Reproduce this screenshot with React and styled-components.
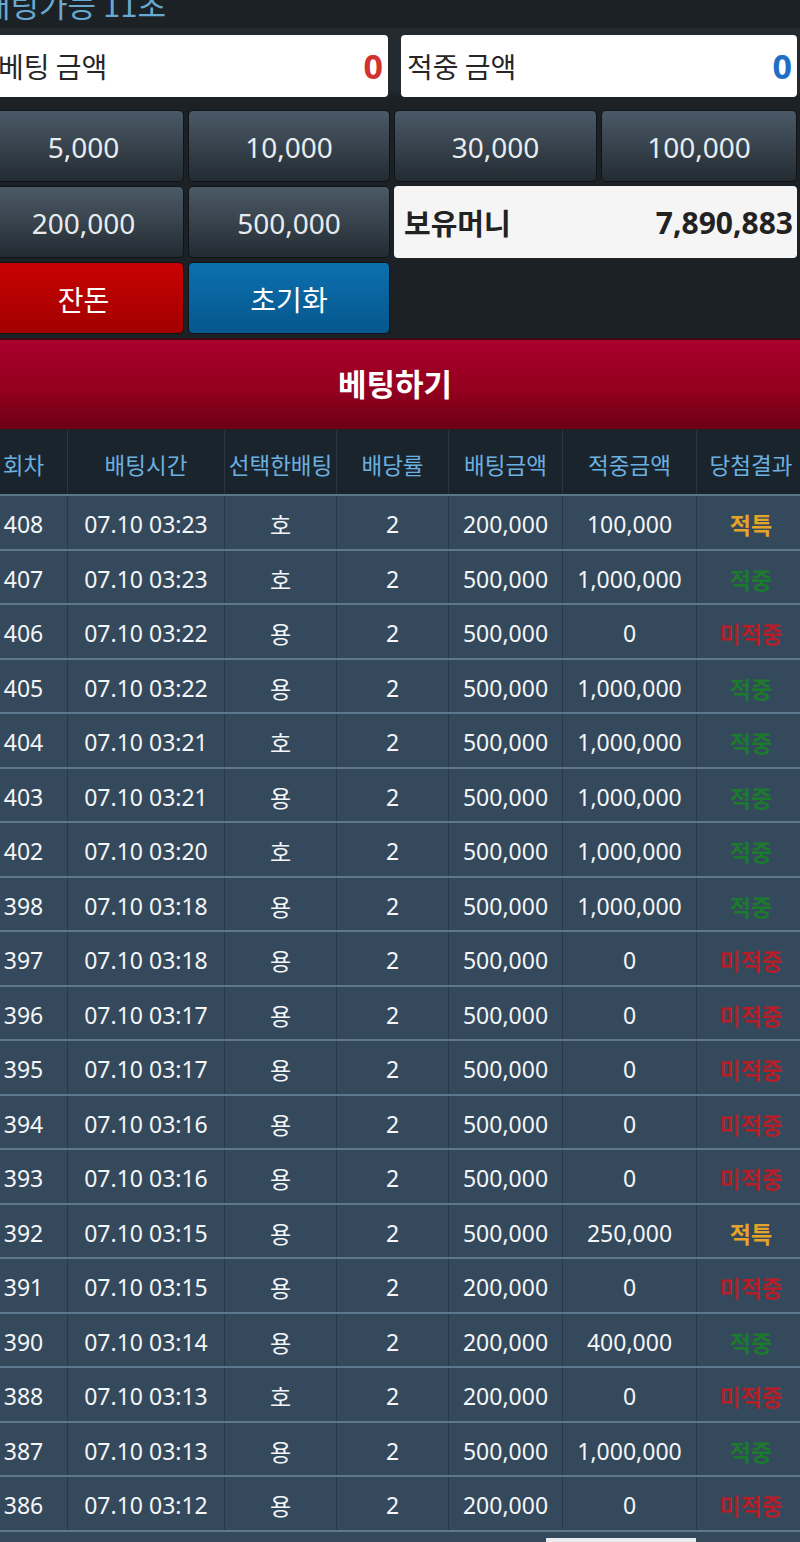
import React from 'react'
import styled, { createGlobalStyle } from 'styled-components'

const GlobalStyle = createGlobalStyle`
  html, body {
    margin: 0;
    padding: 0;
    background: #1c2126;
    overflow-x: hidden;
  }
  body {
    font-family: "Noto Sans", "Noto Sans CJK KR", sans-serif;
  }
`

const cols = '88px 157px 112px 112px 114px 134px 109px'

const Page = styled.div`
  width: 826px;
  margin-left: -20px;
  background: #1c2126;
`

const TitleBar = styled.div`
  height: 28px;
  overflow: hidden;
  padding-left: 2px;
`

const Title = styled.div`
  margin-top: -12px;
  font-family: "Noto Sans CJK KR", sans-serif;
  font-size: 31px;
  line-height: 32px;
  color: #68a9cf;
  white-space: nowrap;
`

const InputRow = styled.div`
  display: grid;
  grid-template-columns: 1fr 1fr;
  column-gap: 13px;
  padding: 7px 9px 0 12px;
  background: linear-gradient(#232a30 0, #232a30 62px, #1c2126 69px);
`

const AmountBox = styled.div`
  height: 62px;
  display: flex;
  align-items: center;
  justify-content: space-between;
  padding: 0 5px 0 6px;
  background: #fff;
  border-radius: 4px;
`

const AmountLabel = styled.span`
  font-family: "Noto Sans CJK KR", sans-serif;
  font-size: 28px;
  color: #262626;
`

const AmountValue = styled.span`
  font-size: 34px;
  font-weight: 700;
  color: ${p => p.$tone === 'blue' ? '#1f6fc6' : '#d23232'};
`

const ButtonGrid = styled.div`
  display: grid;
  grid-template-columns: 201px 202px 203px 1fr;
  grid-auto-rows: 72px;
  column-gap: 4px;
  row-gap: 4px;
  padding: 13px 9px 0 3px;
`

const Chip = styled.div`
  display: flex;
  align-items: center;
  justify-content: center;
  padding-top: 2px;
  border: 1px solid #101418;
  border-radius: 5px;
  font-size: 28px;
  color: ${p => p.$variant === 'chip' ? '#e8ecef' : '#ffffff'};
  font-family: "Noto Sans", "Noto Sans CJK KR", sans-serif;
  background: ${p =>
    p.$variant === 'red'
      ? 'linear-gradient(#c80202, #a20000)'
      : p.$variant === 'blue'
      ? 'linear-gradient(#0c70ae, #06578e)'
      : 'linear-gradient(#4b5a67, #232b32)'};
`

const MoneyBox = styled.div`
  grid-column: span 2;
  display: flex;
  align-items: center;
  justify-content: space-between;
  padding: 0 4px 0 10px;
  background: #f5f5f5;
  border-radius: 4px;
  font-weight: 700;
  color: #222;
`

const MoneyLabel = styled.span`
  font-family: "Noto Sans CJK KR", sans-serif;
  font-size: 29px;
`

const MoneyValue = styled.span`
  font-size: 30px;
`

const Banner = styled.div`
  box-sizing: border-box;
  margin-top: 4px;
  height: 91px;
  border-top: 2px solid #3a0a12;
  display: flex;
  align-items: center;
  justify-content: center;
  padding: 0 0 4px 4px;
  background: linear-gradient(#a8002b, #94001f 55%, #6e0015);
  color: #fff;
  font-family: "Noto Sans CJK KR", sans-serif;
  font-size: 31px;
  font-weight: 700;
`

const Table = styled.div`
  margin-top: 1px;
`

const HeadRow = styled.div`
  display: grid;
  grid-template-columns: ${cols};
  height: 64px;
  background: #1a242d;
  border-bottom: 2px solid #5b7589;
`

const HeadCell = styled.div`
  display: flex;
  align-items: center;
  justify-content: center;
  padding-top: 3px;
  border-right: 1px solid #2a3743;
  font-family: "Noto Sans CJK KR", sans-serif;
  font-size: 22.5px;
  color: #6cb0e0;
  white-space: nowrap;
`

const Row = styled.div`
  display: grid;
  grid-template-columns: ${cols};
  height: 52.5px;
  background: #34495c;
  border-bottom: 2px solid #5d788e;
`

const Cell = styled.div`
  display: flex;
  align-items: center;
  justify-content: center;
  padding-top: 4px;
  border-right: 1px solid #263849;
  font-size: 23px;
  color: #f4f6f8;
  white-space: nowrap;
`

const resultColors = {
  적특: '#e5a428',
  적중: '#1c7a2c',
  미적중: '#b51e28',
}

const Result = styled(Cell)`
  font-family: "Noto Sans CJK KR", sans-serif;
  font-weight: 700;
  color: ${p => resultColors[p.$result]};
`

const PartialRow = styled.div`
  position: relative;
  height: 20px;
  background: #34495c;
`

const HomeBar = styled.div`
  position: absolute;
  left: 566px;
  top: 6px;
  width: 150px;
  height: 6px;
  background: #e9edf0;
`

const headers = ['회차', '배팅시간', '선택한배팅', '배당률', '배팅금액', '적중금액', '당첨결과']

const rows = [
  ['408', '07.10 03:23', '호', '200,000', '100,000', '적특'],
  ['407', '07.10 03:23', '호', '500,000', '1,000,000', '적중'],
  ['406', '07.10 03:22', '용', '500,000', '0', '미적중'],
  ['405', '07.10 03:22', '용', '500,000', '1,000,000', '적중'],
  ['404', '07.10 03:21', '호', '500,000', '1,000,000', '적중'],
  ['403', '07.10 03:21', '용', '500,000', '1,000,000', '적중'],
  ['402', '07.10 03:20', '호', '500,000', '1,000,000', '적중'],
  ['398', '07.10 03:18', '용', '500,000', '1,000,000', '적중'],
  ['397', '07.10 03:18', '용', '500,000', '0', '미적중'],
  ['396', '07.10 03:17', '용', '500,000', '0', '미적중'],
  ['395', '07.10 03:17', '용', '500,000', '0', '미적중'],
  ['394', '07.10 03:16', '용', '500,000', '0', '미적중'],
  ['393', '07.10 03:16', '용', '500,000', '0', '미적중'],
  ['392', '07.10 03:15', '용', '500,000', '250,000', '적특'],
  ['391', '07.10 03:15', '용', '200,000', '0', '미적중'],
  ['390', '07.10 03:14', '용', '200,000', '400,000', '적중'],
  ['388', '07.10 03:13', '호', '200,000', '0', '미적중'],
  ['387', '07.10 03:13', '용', '500,000', '1,000,000', '적중'],
  ['386', '07.10 03:12', '용', '200,000', '0', '미적중'],
]

const chips = ['5,000', '10,000', '30,000', '100,000', '200,000', '500,000']

export default function App() {
  return (
    <>
      <GlobalStyle />
      <Page>
        <TitleBar>
          <Title>배팅가능 11초</Title>
        </TitleBar>

        <InputRow>
          <AmountBox>
            <AmountLabel>베팅 금액</AmountLabel>
            <AmountValue>0</AmountValue>
          </AmountBox>
          <AmountBox>
            <AmountLabel>적중 금액</AmountLabel>
            <AmountValue $tone="blue">0</AmountValue>
          </AmountBox>
        </InputRow>

        <ButtonGrid>
          {chips.map(c => (
            <Chip key={c} $variant="chip">{c}</Chip>
          ))}
          <MoneyBox>
            <MoneyLabel>보유머니</MoneyLabel>
            <MoneyValue>7,890,883</MoneyValue>
          </MoneyBox>
          <Chip $variant="red">잔돈</Chip>
          <Chip $variant="blue">초기화</Chip>
        </ButtonGrid>

        <Banner>베팅하기</Banner>

        <Table>
          <HeadRow>
            {headers.map(h => (
              <HeadCell key={h}>{h}</HeadCell>
            ))}
          </HeadRow>
          {rows.map(r => (
            <Row key={r[0]}>
              <Cell>{r[0]}</Cell>
              <Cell>{r[1]}</Cell>
              <Cell>{r[2]}</Cell>
              <Cell>2</Cell>
              <Cell>{r[3]}</Cell>
              <Cell>{r[4]}</Cell>
              <Result $result={r[5]}>{r[5]}</Result>
            </Row>
          ))}
          <PartialRow>
            <HomeBar />
          </PartialRow>
        </Table>
      </Page>
    </>
  )
}
